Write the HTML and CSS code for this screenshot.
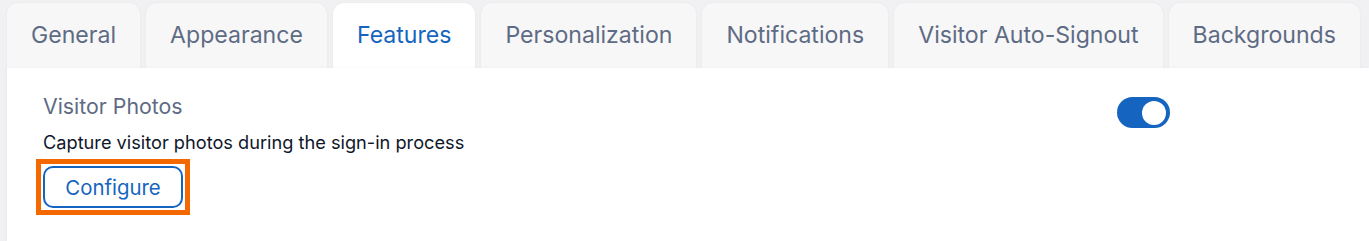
FILE: index.html
```html
<!DOCTYPE html>
<html lang="en">
<head>
<meta charset="utf-8">
<title>Settings</title>
<link rel="stylesheet" href="styles.css">
</head>
<body>
<div class="page">
  <nav class="tabs">
    <div class="tab">General</div>
    <div class="tab">Appearance</div>
    <div class="tab active">Features</div>
    <div class="tab">Personalization</div>
    <div class="tab">Notifications</div>
    <div class="tab">Visitor Auto-Signout</div>
    <div class="tab">Backgrounds</div>
  </nav>
  <section class="panel">
    <div class="row">
      <div class="info">
        <div class="title">Visitor Photos</div>
        <div class="desc">Capture visitor photos during the sign-in process</div>
        <div class="focus-ring"><button class="btn">Configure</button></div>
      </div>
      <div class="toggle"><span class="knob"></span></div>
    </div>
  </section>
</div>
</body>
</html>
```

FILE: styles.css
```css
html, body {
  margin: 0;
  padding: 0;
  height: 100%;
  background: #f1f1f3;
  font-family: Inter, "Noto Sans", sans-serif;
}
.page {
  padding: 3px 0 0 7px;
  height: 100%;
  box-sizing: border-box;
  display: flex;
  flex-direction: column;
}
.tabs {
  display: flex;
  gap: 6px;
}
.tab {
  height: 65px;
  padding: 0 24px 2px;
  box-sizing: border-box;
  display: flex;
  align-items: center;
  justify-content: center;
  background: #f7f7f8;
  border-radius: 11px 11px 0 0;
  box-shadow: 0 0 3px rgba(0, 0, 0, 0.05);
  color: #5e6b84;
  font-size: 23.1px;
  font-weight: 400;
  white-space: nowrap;
}
.tab.active {
  background: #ffffff;
  color: #1565c0;
}
.panel {
  flex: 1;
  background: #ffffff;
  padding: 25px 0 0 29px;
  box-shadow: -1px 0 3px rgba(0, 0, 0, 0.04);
  position: relative;
  z-index: 1;
}
.row {
  width: 1134px;
  display: flex;
  justify-content: space-between;
  align-items: flex-start;
}
.info {
  display: flex;
  flex-direction: column;
  align-items: flex-start;
  padding-left: 7px;
}
.title {
  font-size: 21.3px;
  font-weight: 400;
  line-height: 26px;
  color: #5e6b84;
}
.desc {
  margin-top: 11px;
  font-size: 18.2px;
  font-weight: 400;
  line-height: 24px;
  color: #0f172a;
}
.focus-ring {
  margin: 5px 0 0 -7px;
  border: 5px solid #f46800;
  padding: 2px;
  display: flex;
}
.btn {
  width: 140px;
  height: 42px;
  border: 2px solid #1565c0;
  border-radius: 10px;
  background: #ffffff;
  color: #1565c0;
  font-family: Inter, "Noto Sans", sans-serif;
  font-size: 20.4px;
  font-weight: 400;
  padding: 0;
}
.toggle {
  margin-top: 4px;
  width: 53px;
  height: 31px;
  border-radius: 16px;
  background: #1565c0;
  display: flex;
  align-items: center;
  justify-content: flex-end;
  padding-right: 4px;
  box-sizing: border-box;
}
.knob {
  width: 24px;
  height: 24px;
  border-radius: 50%;
  background: #ffffff;
}
```
